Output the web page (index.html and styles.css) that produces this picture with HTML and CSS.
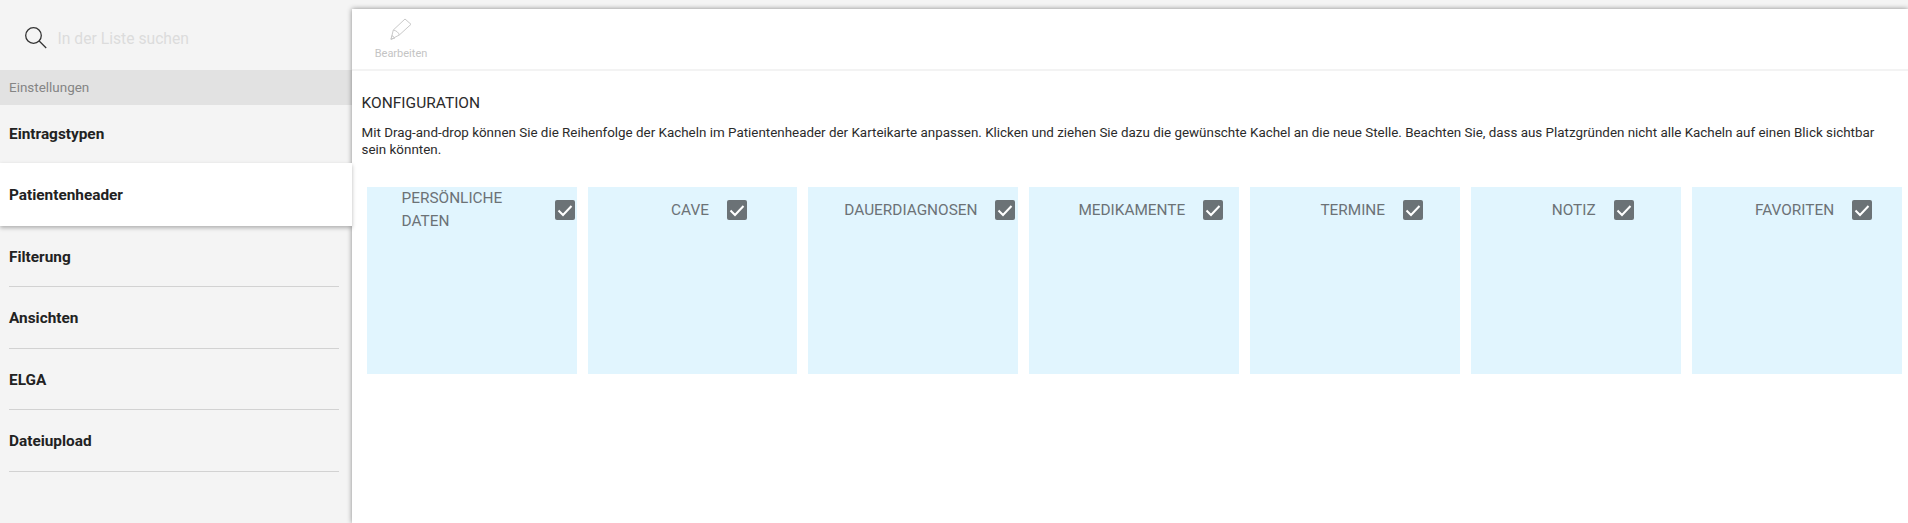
FILE: index.html
```html
<!DOCTYPE html>
<html lang="de">
<head>
<meta charset="utf-8">
<title>Konfiguration</title>
<link rel="stylesheet" href="styles.css">
</head>
<body>
<div class="app">
  <aside class="sidebar">
    <div class="search">
      <svg class="search-icon" width="24" height="24" viewBox="0 0 24 24" fill="none" stroke="#333" stroke-width="1.3"><circle cx="8.500" cy="9.500" r="7.800"/><path d="M14.200 15 L21.200 22"/></svg>
      <span class="search-text">In der Liste suchen</span>
    </div>
    <div class="group">Einstellungen</div>
    <nav class="nav">
      <div class="item first"><span>Eintragstypen</span></div>
      <div class="item active"><span>Patientenheader</span></div>
      <div class="item short"><span>Filterung</span></div>
      <div class="item"><span>Ansichten</span></div>
      <div class="item short"><span>ELGA</span></div>
      <div class="item"><span>Dateiupload</span></div>
    </nav>
  </aside>
  <main class="main">
    <div class="toolbar">
      <div class="tool">
        <svg width="24" height="24" viewBox="0 0 24 24" fill="none" stroke="#c9c9c9" stroke-width="1"><path d="M1 21.300 L3.300 12 L15 1 L21 6.300 L9.300 17 Z"/><path d="M3.300 12 C6 12.500 8.800 14.500 9.300 17"/><path d="M1 21.300 L2 17.500 L5 20 Z"/></svg>
        <span>Bearbeiten</span>
      </div>
    </div>
    <section class="content">
      <h1 class="title">KONFIGURATION</h1>
      <p class="desc">Mit Drag-and-drop können Sie die Reihenfolge der Kacheln im Patientenheader der Karteikarte anpassen. Klicken und ziehen Sie dazu die gewünschte Kachel an die neue Stelle. Beachten Sie, dass aus Platzgründen nicht alle Kacheln auf einen Blick sichtbar sein könnten.</p>
      <div class="tiles">
        <div class="tile"><div class="tile-head"><span class="label">Persönliche Daten</span><span class="check"><svg width="20" height="20" viewBox="0 0 20 20" fill="none" stroke="#fff" stroke-width="2"><path d="M3.500 10.500 L8 15 L16.500 6"/></svg></span></div></div>
        <div class="tile"><div class="tile-head"><span class="label">Cave</span><span class="check"><svg width="20" height="20" viewBox="0 0 20 20" fill="none" stroke="#fff" stroke-width="2"><path d="M3.500 10.500 L8 15 L16.500 6"/></svg></span></div></div>
        <div class="tile"><div class="tile-head"><span class="label">Dauerdiagnosen</span><span class="check"><svg width="20" height="20" viewBox="0 0 20 20" fill="none" stroke="#fff" stroke-width="2"><path d="M3.500 10.500 L8 15 L16.500 6"/></svg></span></div></div>
        <div class="tile"><div class="tile-head"><span class="label">Medikamente</span><span class="check"><svg width="20" height="20" viewBox="0 0 20 20" fill="none" stroke="#fff" stroke-width="2"><path d="M3.500 10.500 L8 15 L16.500 6"/></svg></span></div></div>
        <div class="tile"><div class="tile-head"><span class="label">Termine</span><span class="check"><svg width="20" height="20" viewBox="0 0 20 20" fill="none" stroke="#fff" stroke-width="2"><path d="M3.500 10.500 L8 15 L16.500 6"/></svg></span></div></div>
        <div class="tile"><div class="tile-head"><span class="label">Notiz</span><span class="check"><svg width="20" height="20" viewBox="0 0 20 20" fill="none" stroke="#fff" stroke-width="2"><path d="M3.500 10.500 L8 15 L16.500 6"/></svg></span></div></div>
        <div class="tile"><div class="tile-head"><span class="label">Favoriten</span><span class="check"><svg width="20" height="20" viewBox="0 0 20 20" fill="none" stroke="#fff" stroke-width="2"><path d="M3.500 10.500 L8 15 L16.500 6"/></svg></span></div></div>
      </div>
    </section>
  </main>
</div>
</body>
</html>
```
FILE: styles.css
```css
* { box-sizing: border-box; }
html, body { margin: 0; height: 100%; overflow: hidden; }
body { background: #f4f4f4; font-family: Roboto, "Liberation Sans", sans-serif; color: #2b2b2b; }
.app { display: flex; height: 523px; }

.sidebar { flex: 0 0 352px; width: 352px; display: flex; flex-direction: column; }
.search { height: 70px; display: flex; align-items: center; padding: 6px 0 0 25px; flex: none; }
.search-icon { flex: none; margin-right: 8.500px; }
.search-text { font-size: 15.700px; color: #dcdcdc; }
.group { height: 35px; flex: none; background: #e2e2e2; color: #858585; font-size: 13.440px; line-height: 36px; padding-left: 9px; }

.nav { display: flex; flex-direction: column; }
.item { height: 62px; display: flex; align-items: center; padding: 0 9px; font-size: 15.360px; font-weight: 700; color: #222; position: relative; }
.nav .item { background-image: linear-gradient(#d2d2d2, #d2d2d2); background-repeat: no-repeat; background-size: 330px 1px; background-position: 9px bottom; }
.nav .item.first { height: 58px; background-image: none; }
.nav .item.active { height: 63px; background: #fff; z-index: 2; box-shadow: 0 2px 4px rgba(0,0,0,.28); }
.nav .item.short { height: 61px; }

.main { flex: 1; min-width: 0; margin-top: 9px; background: #fff; box-shadow: 0 0 5px rgba(0,0,0,.45); display: flex; flex-direction: column; position: relative; z-index: 1; }
.toolbar { height: 62px; flex: none; border-bottom: 2px solid #f3f3f3; padding: 0 0 0 23px; }
.tool { width: 52px; display: flex; flex-direction: column; align-items: center; padding-top: 9px; }
.tool svg { display: block; margin-left: 2px; }
.tool span { font-size: 11px; line-height: 14px; margin-top: 5px; color: #c4c4c4; white-space: nowrap; }

.content { padding: 23px 6px 0 9.600px; }
.title { margin: 0; font-size: 15.500px; font-weight: 400; line-height: 19px; color: #2b2b2b; }
.desc { margin: 11px 0 0; font-size: 13.400px; line-height: 17px; color: #2b2b2b; }
.tiles { display: flex; gap: 11px; margin: 29px 0 0 5px; }
.tile { flex: 1 1 0; min-width: 0; height: 187px; background: #e1f5fe; }
.tile-head { height: 46px; display: flex; align-items: center; justify-content: center; padding: 0 2px 0 35px; }
.label { font-size: 15.360px; line-height: 23px; color: #6c7276; text-transform: uppercase; margin-right: 18px; }
.check { flex: none; width: 20px; height: 20px; background: #6b7276; border-radius: 2px; display: block; }
.check svg { display: block; }
```
